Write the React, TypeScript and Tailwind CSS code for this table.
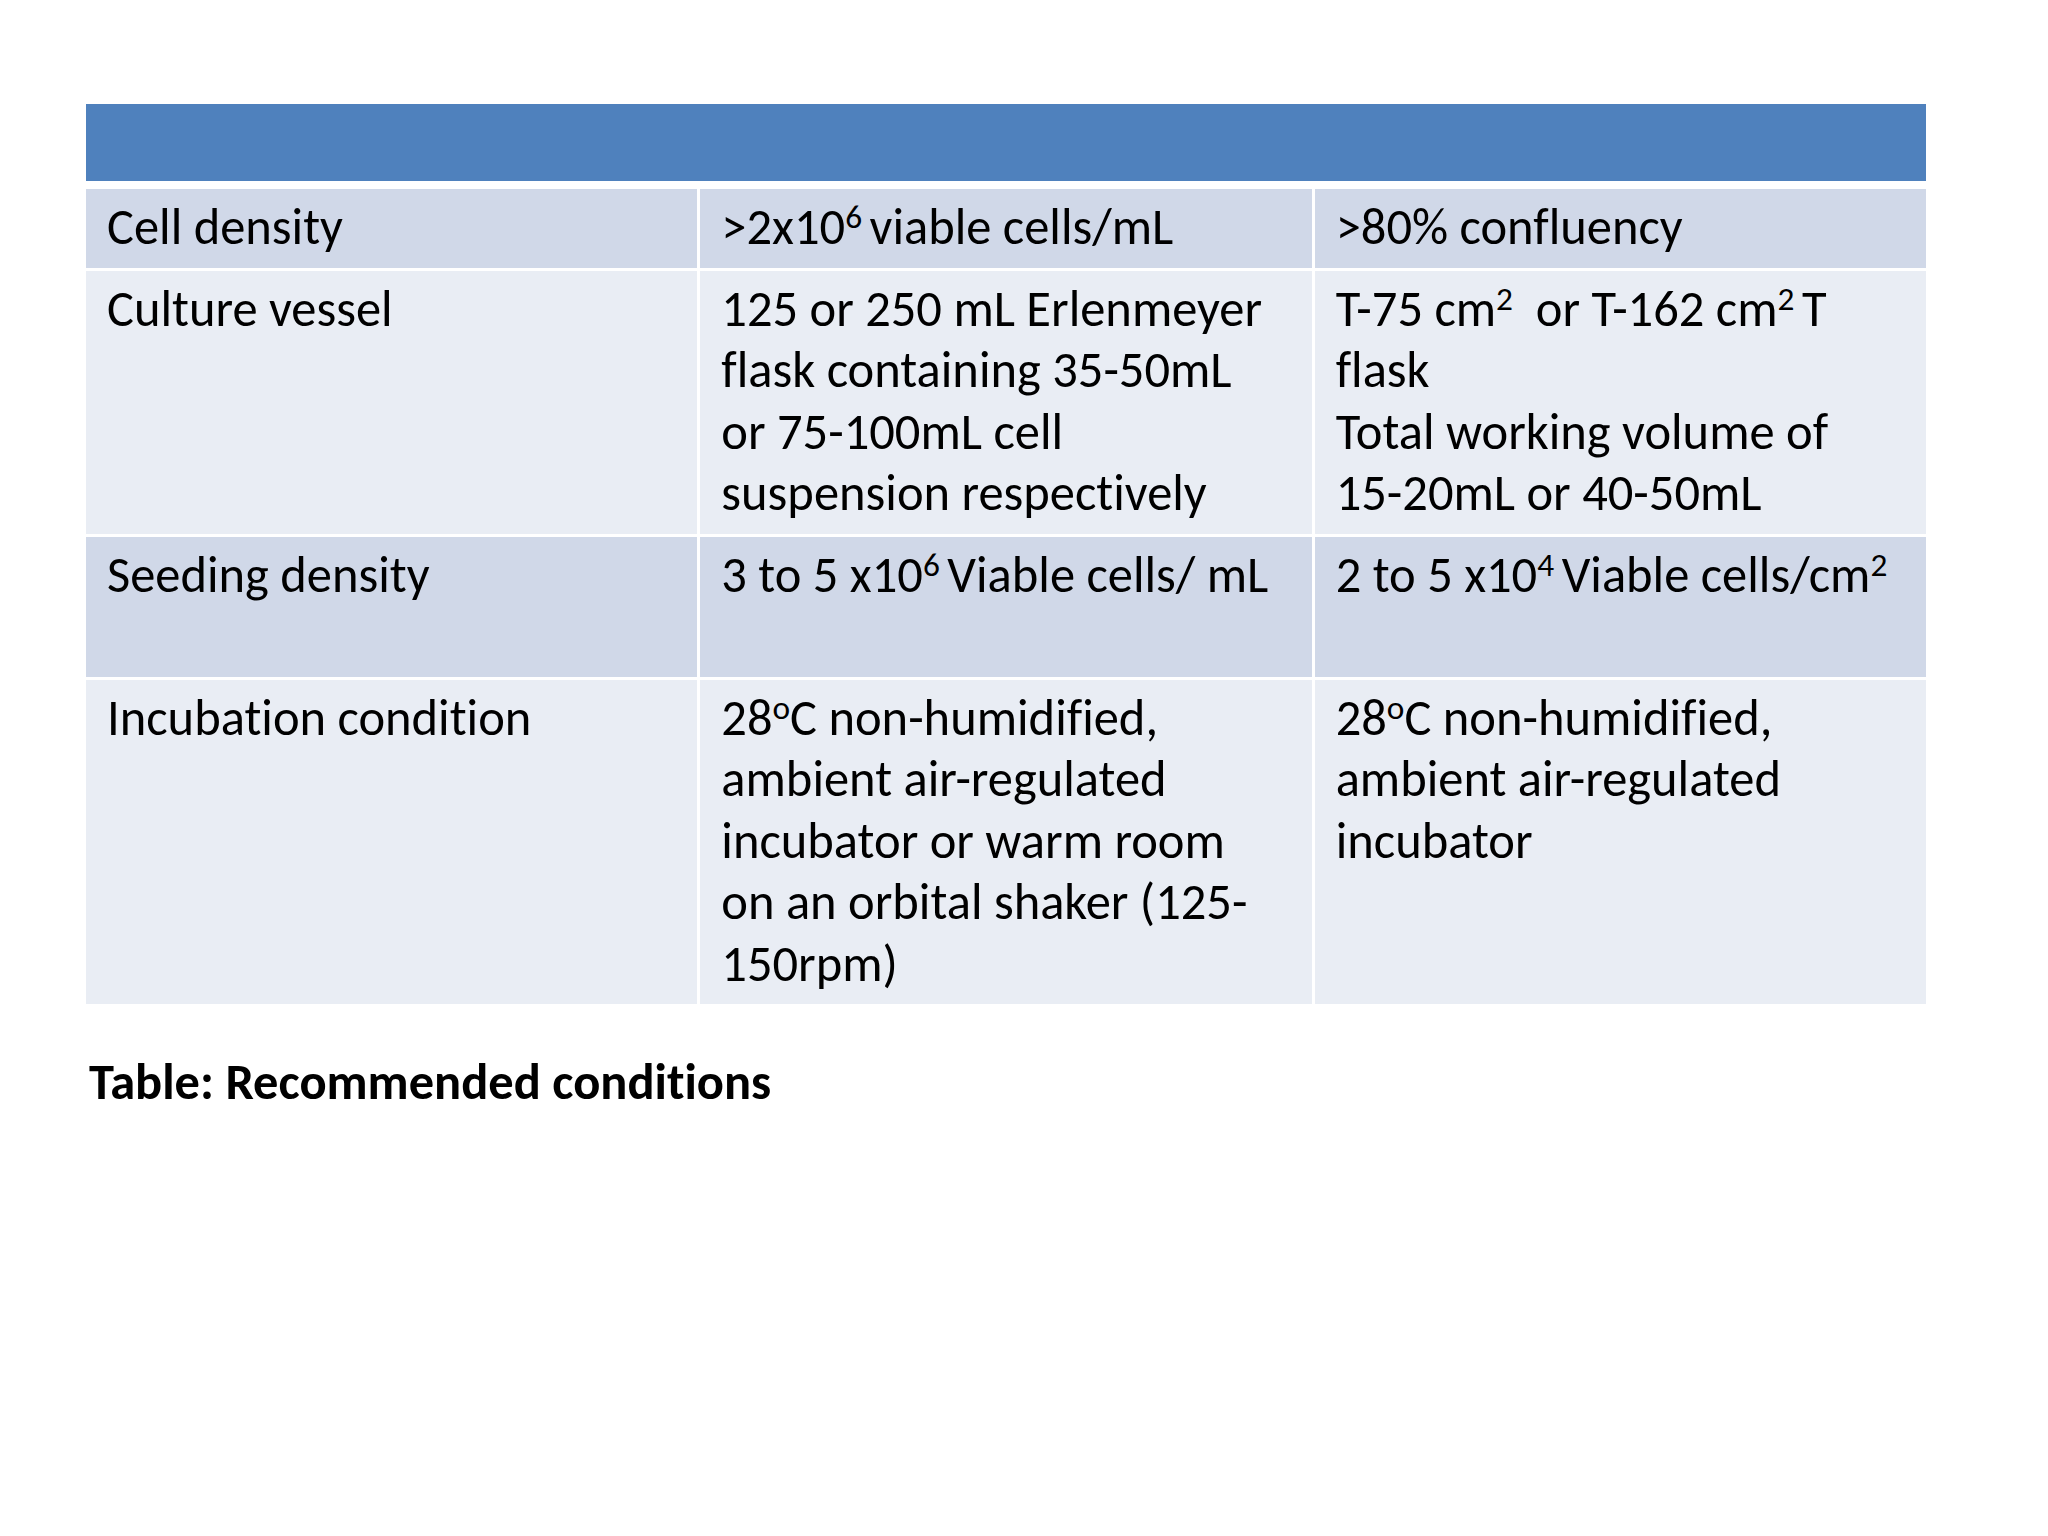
import React from 'react';

type Row = {
  bg: string;
  cells: React.ReactNode[];
  minLines?: number;
};

const rows: Row[] = [
  {
    bg: 'bg-[#d0d8e8]',
    cells: [
      <>Cell density</>,
      <>
        &gt;2x10<sup>6 </sup>viable cells/mL
      </>,
      <>&gt;80% confluency</>,
    ],
  },
  {
    bg: 'bg-[#e9edf4]',
    cells: [
      <>Culture vessel</>,
      <>
        125 or 250 mL Erlenmeyer
        <br />
        flask containing 35-50mL
        <br />
        or 75-100mL cell
        <br />
        suspension respectively
      </>,
      <>
        T-75 cm<sup>2</sup>&nbsp; or T-162 cm<sup>2 </sup>T
        <br />
        flask
        <br />
        Total working volume of
        <br />
        15-20mL or 40-50mL
      </>,
    ],
  },
  {
    bg: 'bg-[#d0d8e8]',
    minLines: 2,
    cells: [
      <>Seeding density</>,
      <>
        3 to 5 x10<sup>6 </sup>Viable cells/ mL
      </>,
      <>
        2 to 5 x10<sup>4 </sup>Viable cells/cm<sup>2</sup>
      </>,
    ],
  },
  {
    bg: 'bg-[#e9edf4]',
    cells: [
      <>Incubation condition</>,
      <>
        28<sup>o</sup>C non-humidified,
        <br />
        ambient air-regulated
        <br />
        incubator or warm room
        <br />
        on an orbital shaker (125-
        <br />
        150rpm)
      </>,
      <>
        28<sup>o</sup>C non-humidified,
        <br />
        ambient air-regulated
        <br />
        incubator
      </>,
    ],
  },
];

export default function App() {
  return (
    <div className="w-[2048px] h-[1536px] bg-white font-[Carlito,Calibri,Lato,sans-serif] text-black [font-variant-ligatures:no-common-ligatures]">
      <div className="pt-[104px] pl-[86px] w-[1926px]">
        {/* header bar */}
        <div className="h-[77px] bg-[#4f81bd]" />

        <div className="mt-[8px] grid grid-cols-3 gap-x-[3px] gap-y-[3px]">
          {rows.map((row, i) =>
            row.cells.map((cell, j) => (
              <div
                key={`${i}-${j}`}
                className={`${row.bg} pl-[21px] pr-[10px] pt-[8px] pb-[9px] text-[50.5px] leading-[61.5px] whitespace-pre-line [&_sup]:text-[66%] [&_sup]:top-[-0.48em] ${
                  row.minLines === 2 ? 'min-h-[140px]' : ''
                }`}
              >
                {cell}
              </div>
            ))
          )}
        </div>

        <p className="mt-[48px] pl-[3px] text-[50.5px] leading-[61.5px] font-bold">
          Table: Recommended conditions
        </p>
      </div>
    </div>
  );
}
